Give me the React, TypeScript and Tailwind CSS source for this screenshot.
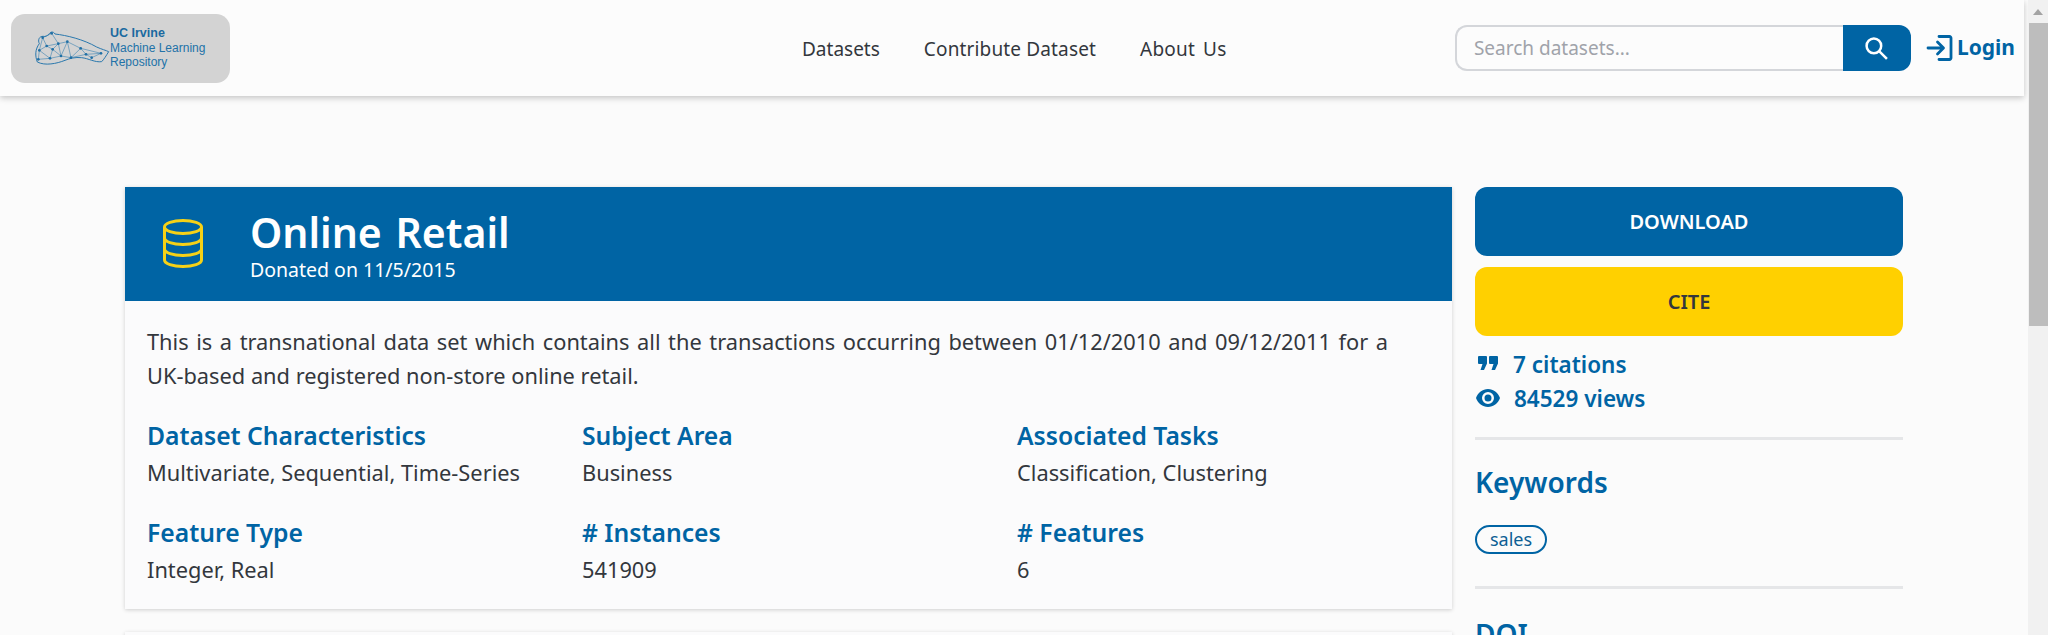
import React from 'react';

const BLUE = 'text-[#0064a4]';

const stats = [
  { label: 'Dataset Characteristics', value: 'Multivariate, Sequential, Time-Series' },
  { label: 'Subject Area', value: 'Business' },
  { label: 'Associated Tasks', value: 'Classification, Clustering' },
  { label: 'Feature Type', value: 'Integer, Real' },
  { label: '# Instances', value: '541909' },
  { label: '# Features', value: '6' },
];

// coords follow the logo crop, viewBox below maps them down
const nodes: [number, number][] = [
  [118, 148], [140, 135], [158, 145], [175, 128], [202, 122], [242, 142], [183, 165], [213, 170],
  [150, 172], [115, 175], [258, 160], [275, 170], [303, 157], [128, 110], [155, 97],
];
const links: [number, number][] = [
  [0, 1], [1, 2], [0, 9], [0, 8], [2, 8], [8, 9], [2, 3], [1, 3], [3, 4], [2, 6], [3, 6], [6, 8],
  [4, 6], [4, 5], [4, 7], [6, 7], [5, 7], [5, 10], [7, 10], [10, 11], [5, 12], [10, 12], [11, 12],
  [1, 13], [13, 14], [3, 14], [0, 13],
];

const BrainLogo = () => (
  <svg width="75" height="35" viewBox="105 90 225 105" fill="none" stroke="#2a78ad" className="shrink-0">
    <path
      strokeWidth="3"
      d="M112 183C105 165 105 145 118 128C113 118 117 105 130 106C136 108 142 104 147 100C150 92 160 90 165 99C200 103 250 115 290 138C305 145 318 148 326 152C318 165 312 175 305 182C285 185 265 172 245 170C225 168 210 172 195 178C170 188 135 195 112 183Z"
    />
    {links.map(([a, b]) => (
      <line key={`${a}-${b}`} x1={nodes[a][0]} y1={nodes[a][1]} x2={nodes[b][0]} y2={nodes[b][1]} strokeWidth="1.600" />
    ))}
    {nodes.map(([x, y]) => (
      <circle key={`${x}-${y}`} cx={x} cy={y} r="4" fill="#1f6fa5" stroke="none" />
    ))}
  </svg>
);

const DatabaseIcon = () => (
  <svg width="42" height="52" viewBox="0 0 42 52" fill="none" stroke="#f5d117" strokeWidth="3">
    <ellipse cx="21" cy="9" rx="18.5" ry="6.5" />
    <path d="M2.5 9v33c0 3.6 8.3 6.5 18.5 6.5s18.5-2.900 18.500-6.500V9" />
    <path d="M2.500 20c0 3.600 8.300 6.500 18.500 6.500s18.500-2.900 18.500-6.500" />
    <path d="M2.500 31c0 3.600 8.300 6.500 18.500 6.500s18.500-2.900 18.500-6.500" />
  </svg>
);

const Header = () => (
  <header className="h-[96px] shrink-0 mr-[4px] flex items-center justify-between bg-[#fcfcfc] shadow-[0_2px_6px_rgba(0,0,0,0.22)] pl-[11px] pr-[9px] relative">
    <div className="w-[219px] h-[69px] rounded-[14px] bg-[#d3d3d3] flex items-center pl-[24px]">
      <BrainLogo />
      <div className="font-['Liberation_Sans',sans-serif] text-[#2272a8] text-[12px] leading-[14.500px]">
        <div className="font-bold text-[#1b6aa0] text-[12.500px]">UC Irvine</div>
        <div>Machine Learning</div>
        <div>Repository</div>
      </div>
    </div>
    <nav className="absolute left-[802px] top-[36px] flex gap-[44px] text-[19px] leading-[26px] text-[#33373d]">
      <span>Datasets</span>
      <span className="tracking-[0.15px]">Contribute Dataset</span>
      <span className="[word-spacing:3px] tracking-[0.2px]">About Us</span>
    </nav>
    <div className="flex items-center">
      <div className="w-[388px] h-[46px] rounded-l-[12px] border-2 border-r-0 border-[#d4d6da] bg-[#fcfcfc] flex items-center pl-[17px] text-[19px] text-[#a0a3aa]">
        Search datasets...
      </div>
      <div className="w-[68px] h-[46px] rounded-r-[12px] bg-[#0064a4] flex items-center justify-center">
        <svg width="25" height="25" viewBox="0 0 24 24" fill="none" stroke="#fff" strokeWidth="2.400">
          <circle cx="9.500" cy="9.500" r="7" />
          <path d="M14.500 14.500L22 22" />
        </svg>
      </div>
      <div className={`ml-[15px] flex items-center gap-[3px] font-bold text-[21px] ${BLUE}`}>
        <svg width="28" height="28" viewBox="0 0 28 28" fill="none" stroke="#0064a4" strokeWidth="2.800" strokeLinecap="round" strokeLinejoin="round">
          <path d="M13 2.500h10.500a1.500 1.500 0 0 1 1.500 1.500v20a1.500 1.500 0 0 1-1.500 1.500H13" />
          <path d="M2 14h15M11.500 8l6 6-6 6" />
        </svg>
        <span>Login</span>
      </div>
    </div>
  </header>
);

const InfoCard = () => (
  <div className="w-[1327px] shrink-0 bg-[#fbfbfc] shadow-[0_1px_4px_rgba(0,0,0,0.18)]">
    <div className="h-[114px] bg-[#0064a4] flex items-center pl-[37px] gap-[46px]">
      <DatabaseIcon />
      <div className="text-white pt-[2px]">
        <h1 className="text-[41px] leading-[50px] font-semibold [word-spacing:3px]">Online Retail</h1>
        <p className="text-[19.500px] leading-[26px]">Donated on 11/5/2015</p>
      </div>
    </div>
    <div className="pl-[22px] pt-[24px] pb-[22px]">
      <p className="w-[1241px] text-[21.800px] leading-[34px] text-[#33373d] text-justify">
        This is a transnational data set which contains all the transactions occurring between 01/12/2010 and 09/12/2011 for a UK-based and registered non-store online retail.
      </p>
      <div className="mt-[25px] grid grid-cols-[repeat(3,435px)] gap-y-[25px]">
        {stats.map((s) => (
          <div key={s.label}>
            <h2 className={`text-[24.700px] leading-[36px] font-semibold ${BLUE}`}>{s.label}</h2>
            <p className="mt-[2px] text-[21.800px] leading-[34px] text-[#33373d]">{s.value}</p>
          </div>
        ))}
      </div>
    </div>
  </div>
);

const Sidebar = () => (
  <aside className="w-[428px] shrink-0 ml-[23px]">
    <div className="h-[69px] rounded-[12px] bg-[#0064a4] text-white font-semibold text-[20px] flex items-center justify-center">
      DOWNLOAD
    </div>
    <div className="mt-[11px] h-[69px] rounded-[12px] bg-[#ffd000] text-[#33373d] font-semibold text-[20px] flex items-center justify-center">
      CITE
    </div>
    <div className={`mt-[12px] font-semibold text-[22.500px] leading-[34px] ${BLUE}`}>
      <div className="flex items-center gap-[15px]">
        <svg className="ml-[3px] -mt-[4px]" width="20" height="14" viewBox="0 0 20 14" fill="#0064a4">
          <path d="M1 0h7a1 1 0 0 1 1 1v6.500L6 14H2.500l2-6H1a1 1 0 0 1-1-1V1a1 1 0 0 1 1-1zM12 0h7a1 1 0 0 1 1 1v6.500L17 14h-3.500l2-6H12a1 1 0 0 1-1-1V1a1 1 0 0 1 1-1z" />
        </svg>
        <span>7 citations</span>
      </div>
      <div className="flex items-center gap-[13px]">
        <svg className="-mt-[2px]" width="26" height="18" viewBox="0 0 24 18">
          <path fill="#0064a4" fillRule="evenodd" d="M12 0C6.500 0 2 3.700 0 9c2 5.300 6.500 9 12 9s10-3.700 12-9c-2-5.300-6.500-9-12-9zm0 15a6 6 0 1 1 0-12 6 6 0 0 1 0 12zm0-9.500a3.500 3.500 0 1 0 0 7 3.500 3.500 0 0 0 0-7z" />
        </svg>
        <span>84529 views</span>
      </div>
    </div>
    <div className="mt-[21px] h-[3px] bg-[#e5e6e8]" />
    <h2 className={`mt-[23px] text-[28px] leading-[38px] font-semibold ${BLUE}`}>Keywords</h2>
    <div className="mt-[24px] flex">
      <span className="h-[29px] px-[13px] rounded-full border-2 border-[#0064a4] text-[18px] leading-[25px] text-[#0d5f94]">sales</span>
    </div>
    <div className="mt-[32px] h-[3px] bg-[#e5e6e8]" />
    <h2 className={`mt-[26px] text-[28px] leading-[38px] font-semibold ${BLUE}`}>DOI</h2>
  </aside>
);

export default function App() {
  return (
    <div className="h-[635px] flex overflow-hidden bg-[#fbfbfb] font-['Noto_Sans',sans-serif]">
      <div className="flex-1 min-w-0 flex flex-col overflow-hidden">
        <Header />
        <main className="flex pl-[125px] pt-[91px]">
          <div className="shrink-0">
            <InfoCard />
            <div className="mt-[23px] h-[60px] w-[1327px] bg-[#fbfbfc] shadow-[0_1px_4px_rgba(0,0,0,0.18)]" />
          </div>
          <Sidebar />
        </main>
      </div>
      <div className="w-[20px] shrink-0 bg-[#f1f1f1] flex flex-col items-end">
        <div className="w-full h-[23px] flex items-center justify-center">
          <div className="w-0 h-0 border-x-[5.500px] border-x-transparent border-b-[6px] border-b-[#a3a3a3]" />
        </div>
        <div className="w-[19px] h-[303px] bg-[#bdbdbd]" />
      </div>
    </div>
  );
}
